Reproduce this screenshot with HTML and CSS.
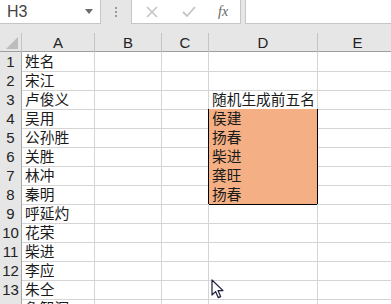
FILE: index.html
```html
<!DOCTYPE html>
<html lang="zh-CN">
<head>
    <meta charset="UTF-8">
    <title>Sheet</title>
    <link rel="stylesheet" href="styles.css">
</head>
<body>
    <div class="toolbar">
        <div class="name-box">
            <span class="name-text">H3</span>
            <svg class="caret" width="8" height="5" viewBox="0 0 8 5"><path d="M0 0H8L4 5Z" fill="#6b6b6b"/></svg>
        </div>
        <div class="grip">
            <span></span><span></span><span></span>
        </div>
        <div class="fx-buttons">
            <svg width="14" height="14" viewBox="0 0 14 14"><path d="M2 2L12 12M12 2L2 12" stroke="#c4c4c4" stroke-width="1.6"/></svg>
            <svg width="16" height="14" viewBox="0 0 16 14"><path d="M2 7L6 11L14 2" stroke="#c4c4c4" stroke-width="1.8" fill="none"/></svg>
            <span class="fx">fx</span>
        </div>
        <div class="formula-input"></div>
    </div>

    <div class="sheet">
        <div class="row head">
            <div class="corner"><span class="tri"></span></div>
            <div class="col-h">A</div>
            <div class="col-h">B</div>
            <div class="col-h">C</div>
            <div class="col-h">D</div>
            <div class="col-h">E</div>
        </div>
        <div class="row">
            <div class="row-h">1</div>
            <div class="cell">姓名</div><div class="cell"></div><div class="cell"></div><div class="cell"></div><div class="cell"></div>
        </div>
        <div class="row">
            <div class="row-h">2</div>
            <div class="cell">宋江</div><div class="cell"></div><div class="cell"></div><div class="cell"></div><div class="cell"></div>
        </div>
        <div class="row">
            <div class="row-h">3</div>
            <div class="cell">卢俊义</div><div class="cell"></div><div class="cell"></div><div class="cell hl-top">随机生成前五名</div><div class="cell"></div>
        </div>
        <div class="row">
            <div class="row-h">4</div>
            <div class="cell">吴用</div><div class="cell"></div><div class="cell hl-left"></div><div class="cell hl">侯建</div><div class="cell"></div>
        </div>
        <div class="row">
            <div class="row-h">5</div>
            <div class="cell">公孙胜</div><div class="cell"></div><div class="cell hl-left"></div><div class="cell hl">扬春</div><div class="cell"></div>
        </div>
        <div class="row">
            <div class="row-h">6</div>
            <div class="cell">关胜</div><div class="cell"></div><div class="cell hl-left"></div><div class="cell hl">柴进</div><div class="cell"></div>
        </div>
        <div class="row">
            <div class="row-h">7</div>
            <div class="cell">林冲</div><div class="cell"></div><div class="cell hl-left"></div><div class="cell hl">龚旺</div><div class="cell"></div>
        </div>
        <div class="row">
            <div class="row-h">8</div>
            <div class="cell">秦明</div><div class="cell"></div><div class="cell hl-left"></div><div class="cell hl">扬春</div><div class="cell"></div>
        </div>
        <div class="row">
            <div class="row-h">9</div>
            <div class="cell">呼延灼</div><div class="cell"></div><div class="cell"></div><div class="cell"></div><div class="cell"></div>
        </div>
        <div class="row">
            <div class="row-h">10</div>
            <div class="cell">花荣</div><div class="cell"></div><div class="cell"></div><div class="cell"></div><div class="cell"></div>
        </div>
        <div class="row">
            <div class="row-h">11</div>
            <div class="cell">柴进</div><div class="cell"></div><div class="cell"></div><div class="cell"></div><div class="cell"></div>
        </div>
        <div class="row">
            <div class="row-h">12</div>
            <div class="cell">李应</div><div class="cell"></div><div class="cell"></div><div class="cell"></div><div class="cell"></div>
        </div>
        <div class="row">
            <div class="row-h">13</div>
            <div class="cell">朱仝</div><div class="cell"></div><div class="cell"></div><div class="cell"></div><div class="cell"></div>
        </div>
        <div class="row">
            <div class="row-h">14</div>
            <div class="cell">鲁智深</div><div class="cell"></div><div class="cell"></div><div class="cell"></div><div class="cell"></div>
        </div>
    </div>

    <!-- mouse pointer sits over the grid -->
    <svg class="pointer" width="14" height="20" viewBox="0 0 14 20">
        <path d="M1 1V16L4.6 12.6L7.2 18.6L9.6 17.6L7 11.6H12Z" fill="#fff" stroke="#1c1c3a" stroke-width="1.2" stroke-linejoin="round"/>
    </svg>
</body>
</html>
```

FILE: styles.css
```css
* {
    margin: 0;
    padding: 0;
    box-sizing: border-box;
}

body {
    width: 391px;
    height: 304px;
    overflow: hidden;
    background-color: #fff;
    font-family: "Liberation Sans", Arial, sans-serif;
    position: relative;
}

.toolbar {
    display: flex;
    align-items: flex-start;
    height: 33px;
    background-color: #e6e6e6;
}

.name-box {
    display: flex;
    align-items: center;
    justify-content: space-between;
    width: 101px;
    height: 24px;
    padding: 0 7px 0 7px;
    background-color: #fff;
    border-right: 1px solid #c6c6c6;
    border-bottom: 1px solid #c6c6c6;
}

.name-text {
    font-size: 16px;
    color: #444;
}

.caret {
    margin-top: -1px;
}

.grip {
    width: 30px;
    height: 24px;
    display: flex;
    flex-direction: column;
    align-items: center;
    justify-content: center;
    gap: 2px;
}

.grip span {
    width: 2px;
    height: 2px;
    background-color: #9a9a9a;
}

.fx-buttons {
    display: flex;
    align-items: center;
    width: 110px;
    height: 24px;
    padding-left: 13px;
    gap: 22px;
    background-color: #fff;
    border-left: 1px solid #c6c6c6;
    border-right: 1px solid #c6c6c6;
    border-bottom: 1px solid #c6c6c6;
}

.fx {
    font-family: "Liberation Serif", serif;
    font-style: italic;
    font-size: 14px;
    color: #666;
    margin-left: -1px;
}

.formula-input {
    flex: 1;
    height: 24px;
    margin-left: 4px;
    background-color: #fff;
    border-left: 1px solid #c6c6c6;
    border-bottom: 1px solid #c6c6c6;
}

.row {
    display: grid;
    grid-template-columns: 22px 73px 67px 47px 109px 80px;
    height: 19px;
}

.head {
    background-color: #e6e6e6;
    border-bottom: 1px solid #9f9f9f;
}

.corner {
    position: relative;
    border-right: 1px solid #c4c4c4;
}

.tri {
    position: absolute;
    right: 3px;
    bottom: 3px;
    width: 0;
    height: 0;
    border-left: 12px solid transparent;
    border-bottom: 12px solid #bcbcbc;
}

.col-h {
    text-align: center;
    font-size: 15px;
    line-height: 18px;
    color: #222;
    border-right: 1px solid #c4c4c4;
    padding-top: 1px;
}

.row-h {
    text-align: center;
    font-size: 15px;
    line-height: 19px;
    color: #222;
    background-color: #e6e6e6;
    border-right: 1px solid #a8a8a8;
    border-bottom: 1px solid #c4c4c4;
}

.cell {
    font-family: "Noto Sans CJK SC", sans-serif;
    font-size: 14.7px;
    line-height: 18px;
    color: #1a1a1a;
    padding-left: 3px;
    white-space: nowrap;
    border-right: 1px solid #d4d4d4;
    border-bottom: 1px solid #d4d4d4;
}

.hl {
    background-color: #f4b084;
    border-right-color: #000;
    border-bottom-color: #000;
}

.hl-top {
    border-bottom-color: #000;
}

.hl-left {
    border-right-color: #000;
}

.pointer {
    position: absolute;
    left: 211px;
    top: 279px;
}
```
